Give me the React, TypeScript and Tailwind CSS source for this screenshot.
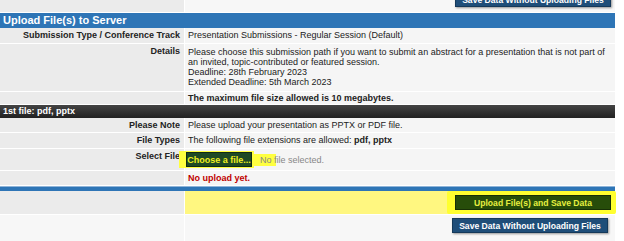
import React from "react";

const font = { fontFamily: '"Liberation Sans", Arial, sans-serif' };

function Row({ label, children, h, gap = true }: { label?: string; children?: React.ReactNode; h?: string; gap?: boolean }) {
  return (
    <div className={`flex gap-px ${gap ? "mt-px" : ""} ${h ?? ""}`}>
      <div className="w-[184px] shrink-0 bg-[#ebebeb] text-right pr-[4px] pt-[2px] font-bold text-[#222]">
        {label}
      </div>
      <div className="flex-1 bg-[#f5f5f5] pl-[3px] pt-[2px] text-[#222]">{children}</div>
    </div>
  );
}

function BlueButton() {
  return (
    <div className="h-[15px] w-[156px] bg-[#1f4e79] border border-[#15395a] shadow-[1px_1px_2px_rgba(0,0,0,0.4)] text-white font-bold text-[8.6px] flex items-center justify-center whitespace-nowrap">
      Save Data Without Uploading Files
    </div>
  );
}

export default function App() {
  return (
    <div className="w-[624px] h-[241px] bg-white overflow-hidden text-[9px] leading-[10px]" style={font}>
      <div className="w-[615px]">
        {/* top row */}
        <div className="flex gap-px h-[12px] overflow-hidden">
          <div className="w-[184px] shrink-0 bg-[#ebebeb]" />
          <div className="flex-1 bg-[#f7f7f7] flex justify-end pr-[4px]">
            <div className="-mt-[8px]">
              <BlueButton />
            </div>
          </div>
        </div>
        {/* header */}
        <div className="mt-px h-[15px] bg-[#2e75b6] text-white font-bold text-[11px] leading-[15px] pl-[3px]">
          Upload File(s) to Server
        </div>
        <Row label="Submission Type / Conference Track" h="h-[15px]" gap={false}>
          Presentation Submissions - Regular Session (Default)
        </Row>
        <Row label="Details" h="h-[47px]">
          <div className="pt-px">
            Please choose this submission path if you want to submit an abstract for a presentation that is not part of an invited, topic-contributed or featured session.
          </div>
          <div>Deadline: 28th February 2023</div>
          <div>Extended Deadline: 5th March 2023</div>
        </Row>
        <Row h="h-[12px]">
          <span className="font-bold relative -top-[1px]">The maximum file size allowed is 10 megabytes.</span>
        </Row>
        <div className="mt-px h-[13px] bg-gradient-to-b from-[#444] to-[#222] text-white font-bold leading-[13px] pl-[3px]">
          1st file: pdf, pptx
        </div>
        <Row label="Please Note" h="h-[14px]" gap={false}>
          Please upload your presentation as PPTX or PDF file.
        </Row>
        <Row label="File Types" h="h-[15px]">
          The following file extensions are allowed: <span className="font-bold">pdf, pptx</span>
        </Row>
        <Row label="Select File" h="h-[21px]">
          <div className="flex items-center">
            <div className="bg-[#ffff40] py-[1px] -ml-[9px] pl-[7px] pr-[2px]">
              <div className="h-[15px] w-[66px] bg-[#1e4a25] border border-[#102a14] text-[#f0f020] font-bold text-[9px] flex items-center justify-center whitespace-nowrap">
                Choose a file...
              </div>
            </div>
            <span className="bg-[#ffff40] text-[#888] h-[12px] pl-[6px] leading-[12px] w-[22px] whitespace-nowrap overflow-visible">
              No file selected.
            </span>
          </div>
        </Row>
        <Row h="h-[14px]">
          <span className="font-bold text-[#c00000]">No upload yet.</span>
        </Row>
        <div className="mt-px h-[5px] bg-[#2e75b6] border-t border-[#8fb4d9]" />
        <div className="flex gap-px h-[23px]">
          <div className="w-[184px] shrink-0 bg-[#ebebeb]" />
          <div className="flex-1 bg-[#fff780] flex justify-end items-center">
            <div className="bg-[#ffff30] pl-[8px] pr-[5px] py-[4px] rounded-[2px] -mr-[1px]">
              <div className="h-[15px] w-[156px] bg-[#274d0a] border border-[#173006] text-[#e8f040] font-bold text-[8.6px] flex items-center justify-center whitespace-nowrap">
                Upload File(s) and Save Data
              </div>
            </div>
          </div>
        </div>
        <div className="flex gap-px h-[27px] mt-px">
          <div className="w-[184px] shrink-0 bg-[#f7f7f7]" />
          <div className="flex-1 bg-[#f7f7f7] flex justify-end items-start pt-[3px] pr-[7px]">
            <BlueButton />
          </div>
        </div>
      </div>
    </div>
  );
}
